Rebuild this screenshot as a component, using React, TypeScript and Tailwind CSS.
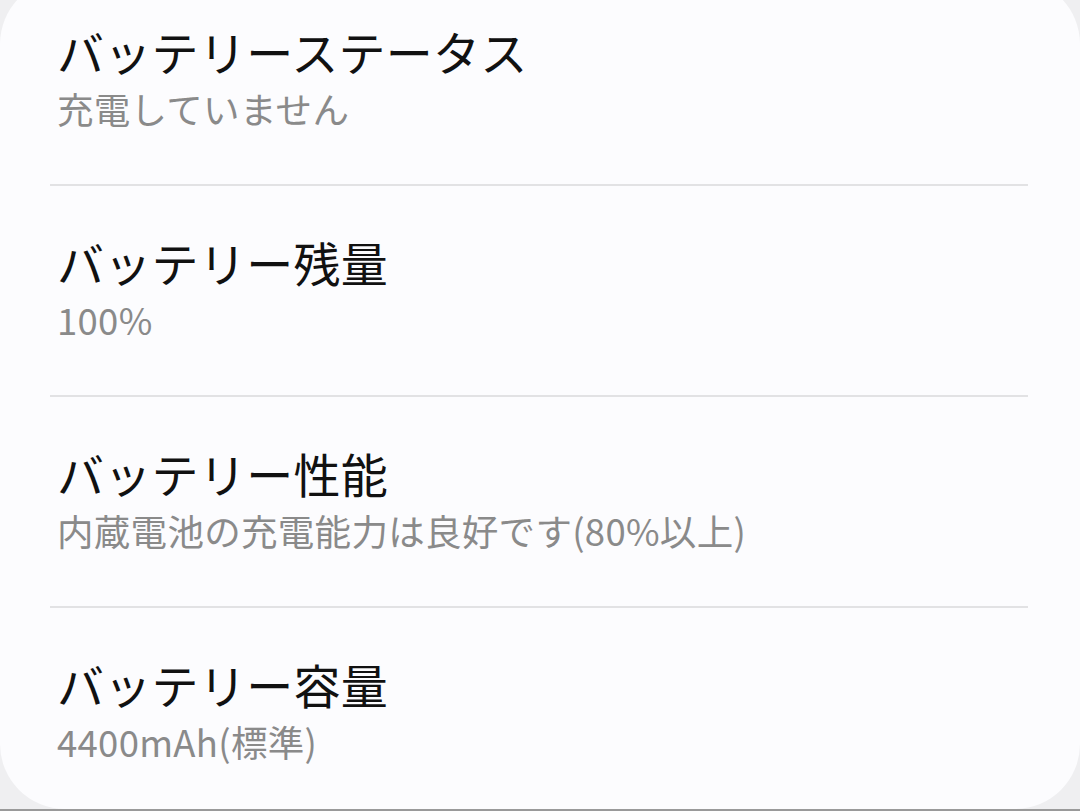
const rows = [
  { title: "バッテリーステータス", value: "充電していません" },
  { title: "バッテリー残量", value: "100%" },
  { title: "バッテリー性能", value: "内蔵電池の充電能力は良好です(80%以上)" },
  { title: "バッテリー容量", value: "4400mAh(標準)" },
];

const App = () => {
  return (
    <div
      className="h-[811px] w-[1080px] overflow-hidden bg-[#efeff1] flex flex-col"
      style={{ fontFamily: '"Noto Sans CJK JP", "Noto Sans", sans-serif' }}
    >
      <div className="-mt-[21px] h-[830px] shrink-0 rounded-[65px] bg-[#fcfcfe] px-[50px] pr-[52px]">
        {rows.map((row, i) => (
          <div key={row.title}>
            {i > 0 && <div className="h-[2px] bg-[#e2e2e4]" />}
            <div className={i === 0 ? "pl-[7px] pt-[42px] pb-[51px]" : "pl-[7px] pt-[46px] pb-[51px]"}>
              <p className="text-[47px] leading-[60px] tracking-[0.3px] text-[#111111]">{row.title}</p>
              <p className="mt-[4px] text-[36.5px] leading-[48px] tracking-[0.3px] text-[#8a8a8a]">{row.value}</p>
            </div>
          </div>
        ))}
      </div>
      <div className="h-[2px] shrink-0 bg-[#9a9a9a]" />
    </div>
  );
};

export default App;
